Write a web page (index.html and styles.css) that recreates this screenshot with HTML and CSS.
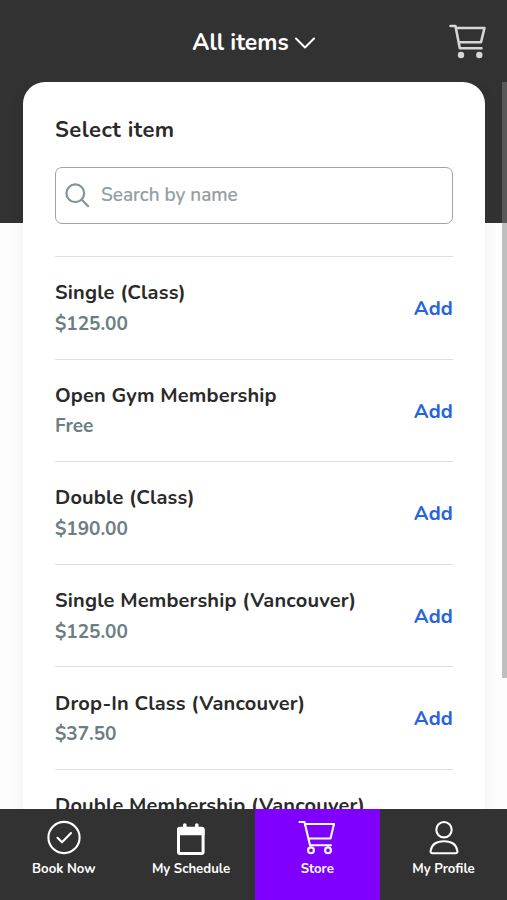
FILE: index.html
```html
<!DOCTYPE html>
<html lang="en">
<head>
<meta charset="utf-8">
<title>Store</title>
<link rel="stylesheet" href="styles.css">
</head>
<body>
<div class="app">
  <header class="header">
    <button class="filter"><span class="filter-label">All items</span>
      <svg class="chevron" width="20" height="12" viewBox="0 0 20 12"><path d="M1 1.5 10 10.5 19 1.5"/></svg>
    </button>
    <svg class="cart" width="38" height="35" viewBox="0 0 38 35"><path d="M1.5 2H6.5L10.8 24.2H32.5M7 4H35.5L32 18.3H10"/><circle cx="12" cy="31" r="3.2"/><circle cx="30.3" cy="31" r="3.2"/></svg>
  </header>
  <main class="content">
    <section class="card">
      <h1 class="title">Select item</h1>
      <label class="search">
        <svg width="25" height="25" viewBox="0 0 25 25"><circle cx="10.3" cy="10.3" r="8.9"/><path d="M16.8 16.8 23.2 23.2"/></svg>
        <span class="placeholder">Search by name</span>
      </label>
      <ul class="items">
        <li class="item"><div><p class="name">Single (Class)</p><p class="price">$125.00</p></div><a class="add">Add</a></li>
        <li class="item"><div><p class="name">Open Gym Membership</p><p class="price">Free</p></div><a class="add">Add</a></li>
        <li class="item"><div><p class="name">Double (Class)</p><p class="price">$190.00</p></div><a class="add">Add</a></li>
        <li class="item"><div><p class="name">Single Membership (Vancouver)</p><p class="price">$125.00</p></div><a class="add">Add</a></li>
        <li class="item"><div><p class="name">Drop-In Class (Vancouver)</p><p class="price">$37.50</p></div><a class="add">Add</a></li>
        <li class="item"><div><p class="name">Double Membership (Vancouver)</p><p class="price">$190.00</p></div><a class="add">Add</a></li>
      </ul>
    </section>
    <div class="scrollbar"></div>
  </main>
  <nav class="nav">
    <a class="tab"><svg width="38" height="36" viewBox="0 0 38 36"><circle cx="19" cy="17.5" r="15.6"/><path d="M12.5 17.8 17 22.3 26 13"/></svg><span>Book Now</span></a>
    <a class="tab"><svg width="38" height="36" viewBox="0 0 38 36"><rect x="6.5" y="8.5" width="24.6" height="25" rx="1.5"/><path class="solid" d="M5 15.3V9.8a3 3 0 0 1 3-3H11V5a1.5 1.5 0 0 1 3.6 0V6.8H23V5a1.5 1.5 0 0 1 3.6 0V6.8H29.6a3 3 0 0 1 3 3V15.3Z"/></svg><span>My Schedule</span></a>
    <a class="tab active"><svg width="38" height="36" viewBox="0 0 38 36"><path d="M1.5 2H6.5L12 25.3H33M7 4H36L32.5 18.5H10.5"/><circle cx="13" cy="30.3" r="2.9"/><circle cx="30" cy="30.3" r="2.9"/></svg><span>Store</span></a>
    <a class="tab"><svg width="38" height="36" viewBox="0 0 38 36"><circle cx="19" cy="9.7" r="7.7"/><path d="M7.5 33.2H30.5Q32.6 33.2 32.4 30.8C31.3 24 26 21.2 19 21.2S6.7 24 5.6 30.8Q5.4 33.2 7.5 33.2Z"/></svg><span>My Profile</span></a>
  </nav>
</div>
</body>
</html>
```
FILE: styles.css
```css
* { box-sizing: border-box; margin: 0; padding: 0; }
body { font-family: Nunito, Lato, "Open Sans", sans-serif; color: #2a2a2a; overflow: hidden; }
svg { fill: none; stroke: currentColor; stroke-linecap: round; stroke-linejoin: round; flex: none; }
.app { height: 900px; display: flex; flex-direction: column; background: linear-gradient(#323232 223px, #fdfdfd 223px); }
.header { height: 82px; flex: none; display: grid; grid-template-columns: 192px 1fr 38px; padding-right: 20px; align-items: center; color: #fff; }
.filter { grid-column: 2; display: flex; align-items: center; gap: 6px; padding-top: 3px; background: none; border: 0; color: #fff; font: 700 23px/32px Nunito, Lato, sans-serif; }
.filter-label { width: 97px; white-space: nowrap; }
.chevron { stroke-width: 2; }
.cart { color: #d6d6d6; stroke-width: 2.6; }
.cart circle { fill: currentColor; stroke: none; }
.content { flex: 1; min-height: 0; display: flex; overflow: hidden; padding-left: 23px; }
.card { width: 462px; height: 860px; flex: none; background: #fff; border-radius: 22px; padding: 32px 32px 0; box-shadow: 0 4px 16px rgba(0, 0, 0, .05); }
.title { font-size: 22px; line-height: 32px; font-weight: 700; letter-spacing: .45px; }
.search { display: flex; align-items: center; gap: 11px; height: 57px; margin-top: 20.5px; padding-left: 9px; border: 1px solid #9ea3a5; border-radius: 7px; color: #84949a; }
.search svg { stroke-width: 2.2; }
.placeholder { font-size: 19px; font-weight: 500; color: #929da2; padding-bottom: 1px; -webkit-text-stroke: .2px #929da2; }
.items { list-style: none; margin-top: 32.5px; }
.item { height: 102.6px; border-top: 1px solid #dedede; display: flex; justify-content: space-between; align-items: center; padding-top: 2px; }
.name, .price, .add { font-size: 20px; line-height: 31.5px; font-weight: 700; white-space: nowrap; letter-spacing: .16px; }
.price { font-size: 19px; color: #6c7e84; letter-spacing: -.05px; }
.add { color: #2864dc; }
.scrollbar { width: 5px; height: 596px; margin-left: auto; background: rgba(128, 128, 128, .5); }
.nav { height: 91px; flex: none; display: grid; grid-template-columns: 127.5px 127px 125.5px 127px; background: #323232; color: #fff; }
.tab { display: flex; flex-direction: column; align-items: center; padding-top: 11px; gap: 2px; font-size: 13.2px; line-height: 22px; font-weight: 700; }
.tab svg { stroke-width: 2.1; }
.tab rect { stroke-width: 3; }
.tab .solid { fill: currentColor; stroke: none; }
.active { background: #8000ff; }
```
